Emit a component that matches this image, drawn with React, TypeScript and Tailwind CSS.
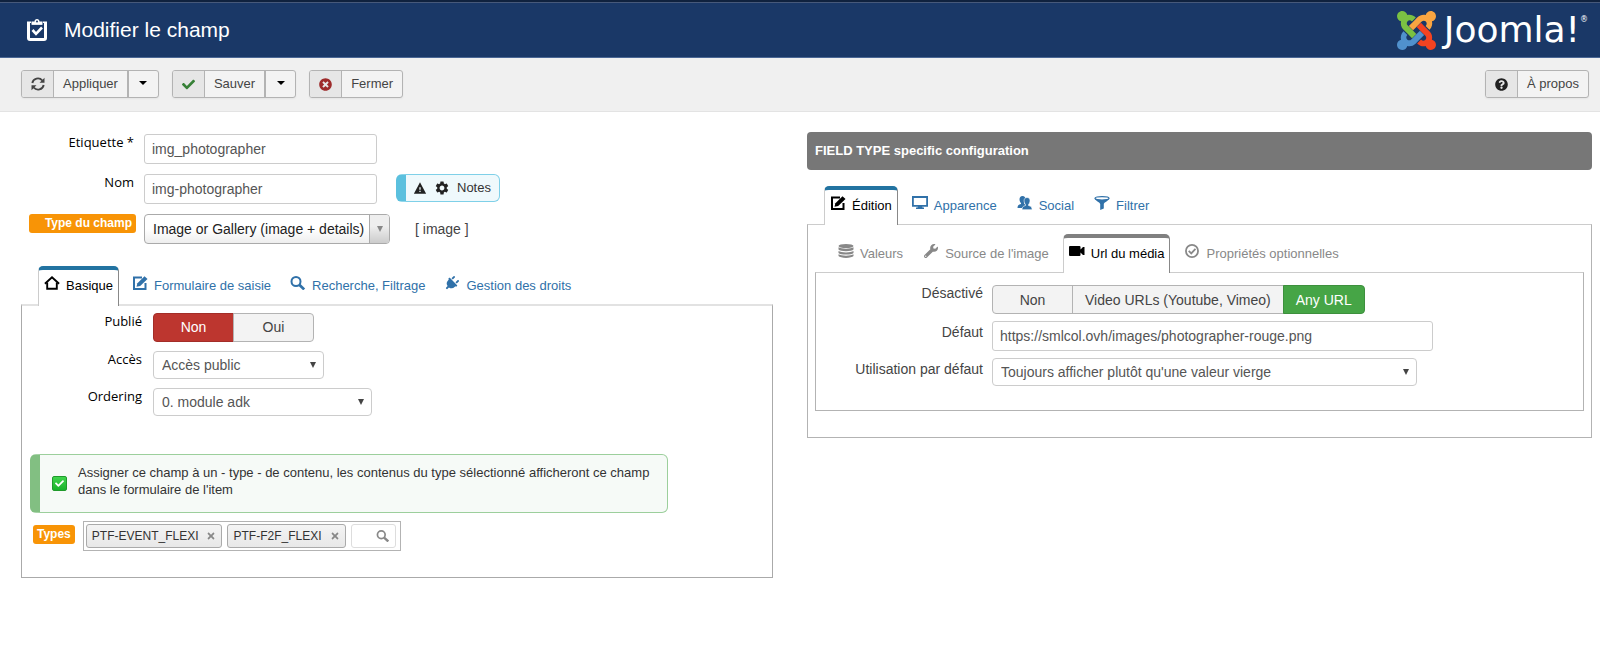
import React from 'react';
import { FaCheck, FaTimesCircle, FaQuestionCircle, FaPlug, FaWrench, FaTimes } from 'react-icons/fa';
import { IoMdWarning } from 'react-icons/io';
import { MdSettings } from 'react-icons/md';

type IconProps = { className?: string };

const ClipboardIcon: React.FC<IconProps> = ({ className }) => (
  <svg viewBox="0 0 20 22" className={className} fill="none">
    <path d="M1.500 3.500v15.500a1.500 1.500 0 0 0 1.500 1.500h14a1.500 1.500 0 0 0 1.500-1.500V3.500" stroke="currentColor" strokeWidth="3" />
    <path d="M0 2.500h4.500v3.200h11V2.500H20v1.500H0z" fill="currentColor" />
    <path d="M5 5.500v-3h2.500C7.500 1 8.500 0 10 0s2.500 1 2.500 2.500H15v3z" fill="currentColor" />
    <circle cx="10" cy="2.600" r="1" fill="#1a3867" />
    <path d="M5.500 11l3.500 3.800 6-6.300" stroke="currentColor" strokeWidth="2.600" />
  </svg>
);

const RefreshIcon: React.FC<IconProps> = ({ className }) => (
  <svg viewBox="0 0 14 14" className={className} fill="none">
    <path d="M1.300 6A5.700 5.700 0 0 1 11.300 3.500M12.700 8A5.700 5.700 0 0 1 2.700 10.500" stroke="currentColor" strokeWidth="1.900" />
    <path d="M13.500.800v5H8.500zM.500 13.200v-5h5z" fill="currentColor" />
  </svg>
);

const HomeIcon: React.FC<IconProps> = ({ className }) => (
  <svg viewBox="0 0 16 14" className={className} fill="none" stroke="currentColor" strokeWidth="1.900">
    <path d="M.900 7.800L8 1.300l7.100 6.500" />
    <path d="M3.200 6.500v6.300h9.600V6.500" />
  </svg>
);

const EditIcon: React.FC<IconProps> = ({ className }) => (
  <svg viewBox="0 0 16 14" className={className} fill="none">
    <path d="M10 1.500H2v11.500h11.500V7" stroke="currentColor" strokeWidth="2" />
    <path d="M4.500 10.800l.900-3.500L12.500.200 15.500 3 8.200 10z" fill="currentColor" />
  </svg>
);

const SearchIcon: React.FC<IconProps> = ({ className }) => (
  <svg viewBox="0 0 16 14" className={className} fill="none" stroke="currentColor">
    <circle cx="6" cy="5.500" r="4.500" strokeWidth="2" />
    <path d="M9.300 8.800l4.900 4.600" strokeWidth="2.800" />
  </svg>
);

const PlugIcon: React.FC<IconProps> = ({ className }) => (
  <span className={className}>
    <FaPlug className="size-[15px] rotate-45" />
  </span>
);

const ScreenIcon: React.FC<IconProps> = ({ className }) => (
  <svg viewBox="0 0 16 14" className={className}>
    <path d="M.900 1h14.200v8.800H.900z" fill="none" stroke="currentColor" strokeWidth="1.800" />
    <path d="M6 10h4l.500 1.500H12V13H4v-1.500h1.500z" fill="currentColor" />
  </svg>
);

const UsersIcon: React.FC<IconProps> = ({ className }) => (
  <svg viewBox="0 0 16 14" className={className} fill="currentColor">
    <path d="M5.500 0c2 0 3 1.300 3 3.200S7.800 6.300 7.100 7v1l2 .800L7.500 12H.500c0-2.500 1-3.300 3.500-4V7C3.200 6.300 2.500 5 2.500 3.200S3.500 0 5.500 0z" />
    <path
      d="M10 1.500c2 0 3 1.300 3 3.200s-.800 3-1.500 3.800v1c2.500.700 3.600 1.500 3.600 4.200H5c0-2.700 1-3.500 3.500-4.200v-1C7.800 7.700 7.100 6.600 7.100 4.700s1-3.200 2.900-3.200z"
      stroke="#fff"
      strokeWidth=".6"
    />
  </svg>
);

const FilterIcon: React.FC<IconProps> = ({ className }) => (
  <svg viewBox="0 0 16 14" className={className}>
    <path d="M.500 2.500C2 5 6 6.500 6.200 8v6l3.600-1.500V8C10 6.500 14 5 15.500 2.500z" fill="currentColor" />
    <ellipse cx="8" cy="2.300" rx="7" ry="1.700" fill="#fff" stroke="currentColor" strokeWidth="1.200" />
  </svg>
);

const DatabaseIcon: React.FC<IconProps> = ({ className }) => (
  <svg viewBox="0 0 16 14" className={className} fill="currentColor">
    <ellipse cx="8" cy="2" rx="7.500" ry="2" />
    <path d="M.500 3.300c2.500 1.900 12.500 1.900 15 0v2.300c-1.500 2.100-13.500 2.100-15 0z" />
    <path d="M.500 7c2.500 1.900 12.500 1.900 15 0v1.900c-1.500 2.100-13.500 2.100-15 0z" />
    <path d="M.500 10.300c2.500 1.900 12.500 1.900 15 0v1.800c-1.500 2.400-13.500 2.400-15 0z" />
  </svg>
);

const CameraIcon: React.FC<IconProps> = ({ className }) => (
  <svg viewBox="0 0 16 14" className={className} fill="currentColor">
    <path d="M1 2h9.500a1 1 0 0 1 1 1v2.500L14 3h1.500v8H14l-2.500-2.500V11a1 1 0 0 1-1 1H1a1 1 0 0 1-1-1V3a1 1 0 0 1 1-1z" />
  </svg>
);

const CheckCircleIcon: React.FC<IconProps> = ({ className }) => (
  <svg viewBox="0 0 15 15" className={className} fill="none" stroke="currentColor" strokeWidth="1.900">
    <circle cx="7.500" cy="7.500" r="6.500" />
    <path d="M4 7.300l2.700 2.800 4.500-4.900" />
  </svg>
);

const ARM =
  'M16.719 14.759L14.22 17.257l-2.37 2.37-.462.466c-1.368 1.365-3.297 1.83-5.047 1.397-.327 1.424-1.604 2.49-3.13 2.49C1.438 23.98 0 22.545 0 20.771c0-1.518 1.052-2.79 2.469-3.129-.437-1.761.027-3.701 1.403-5.07l.156-.16 2.37 2.37-.159.16c-.699.7-.697 1.833 0 2.532.7.7 1.834.701 2.533.001l.463-.465 2.37-2.371 2.502-2.502z';

const JoomlaLogo: React.FC = () => (
  <div className="flex items-center gap-2 text-white">
    <svg viewBox="0 0 24 24" className="size-[39px]">
      <path d={ARM} fill="#5091cd" />
      <path d={ARM} fill="#7ac143" transform="rotate(90 12 12)" />
      <path d={ARM} fill="#f9a541" transform="rotate(180 12 12)" />
      <path d={ARM} fill="#f44321" transform="rotate(270 12 12)" />
    </svg>
    <span className="flex items-start font-['DejaVu_Sans'] font-normal">
      <span className="text-[36px] leading-[40px]">Joomla!</span>
      <span className="text-[8px] leading-[20px]">®</span>
    </span>
  </div>
);

type ToolButtonProps = { icon: React.ReactNode; label: string; menu?: boolean };

const ToolButton: React.FC<ToolButtonProps> = ({ icon, label, menu }) => (
  <div className="flex h-7 rounded-[3px] border border-[#b3b3b3] bg-[#f3f3f3] text-[13px] text-[#444] shadow-xs">
    <button type="button" className="flex">
      <span className="flex h-full w-[31px] items-center justify-center rounded-l-[2px] bg-[#e6e6e6]">{icon}</span>
      <span className="flex h-full items-center border-l border-[#b3b3b3] px-[9px]">{label}</span>
    </button>
    {menu && (
      <button type="button" aria-label={`${label} : autres actions`} className="flex w-[31px] justify-center border-l-2 border-[#b3b3b3] pt-2.5">
        <svg viewBox="0 0 8 4" className="h-1 w-2">
          <path d="M0 0h8L4 4z" />
        </svg>
      </button>
    )}
  </div>
);

type Tab = { label: string; Icon: React.ElementType; active?: boolean };

const Tabs: React.FC<{ tabs: Tab[]; color: string; accent: string; thick?: boolean }> = ({ tabs, color, accent, thick }) => (
  <nav className={`relative flex pl-[17px] text-[13px] leading-5 ${color} ${thick ? '-mb-0.5 gap-[7px]' : '-mb-px gap-2'}`}>
    {tabs.map(({ label, Icon, active }) => (
      <a
        key={label}
        href="#"
        className={`flex gap-1.5 border-x border-t-4 px-[5px] pt-1.5 ${thick ? 'h-10' : 'h-[39px]'} ${
          active ? `rounded-t-[5px] border-r-[#888] border-l-[#ccc] bg-white text-black ${accent}` : 'border-transparent'
        }`}
      >
        <Icon className="h-3.5 w-4" />
        {label}
      </a>
    ))}
  </nav>
);

const Choices: React.FC<{ name: string; options: string[]; value: string; on: string }> = ({ name, options, value, on }) => (
  <div role="radiogroup" aria-label={name} className="flex h-[29px] text-[14px] text-[#444]">
    {options.map((o) => (
      <label
        key={o}
        className={`-ml-px flex min-w-[81px] items-center justify-center border px-3 first:ml-0 first:rounded-l-[4px] last:rounded-r-[4px] ${
          o === value ? on : 'border-[#b3b3b3] bg-[#f3f3f3]'
        }`}
      >
        <input type="radio" name={name} defaultChecked={o === value} className="sr-only" />
        {o}
      </label>
    ))}
  </div>
);

const Select: React.FC<{ id: string; value: string; width: string }> = ({ id, value, width }) => (
  <div className={`relative ${width}`}>
    <select id={id} className="block h-7 w-full appearance-none rounded-[4px] border border-[#ccc] bg-white pl-2 text-[14px] text-[#555]">
      <option>{value}</option>
    </select>
    <svg viewBox="0 0 6 6" className="pointer-events-none absolute top-[11px] right-2 size-1.5 text-[#444]" fill="currentColor">
      <path d="M0 0h6L3 6z" />
    </svg>
  </div>
);

const INPUT = 'block h-[30px] rounded-[3px] border border-[#ccc] bg-white px-[7px] text-[14px] text-[#555]';
const LABEL = "text-right font-['Open_Sans',sans-serif] text-[13px] leading-4 text-black";
const BADGE = 'rounded-[3px] bg-[#f89406] text-[12px] leading-[19px] font-bold text-white';

const mainTabs: Tab[] = [
  { label: 'Basique', Icon: HomeIcon, active: true },
  { label: 'Formulaire de saisie', Icon: EditIcon },
  { label: 'Recherche, Filtrage', Icon: SearchIcon },
  { label: 'Gestion des droits', Icon: PlugIcon },
];

const typeTabs: Tab[] = [
  { label: 'Édition', Icon: EditIcon, active: true },
  { label: 'Apparence', Icon: ScreenIcon },
  { label: 'Social', Icon: UsersIcon },
  { label: 'Filtrer', Icon: FilterIcon },
];

const editTabs: Tab[] = [
  { label: 'Valeurs', Icon: DatabaseIcon },
  { label: "Source de l'image", Icon: FaWrench },
  { label: 'Url du média', Icon: CameraIcon, active: true },
  { label: 'Propriétés optionnelles', Icon: CheckCircleIcon },
];

const FieldHead: React.FC = () => (
  <div className="grid grid-cols-[115px_1fr] items-start gap-x-2 gap-y-2.5">
    <label htmlFor="label" className={`${LABEL} pr-0.5`}>Etiquette *</label>
    <input id="label" defaultValue="img_photographer" className={`${INPUT} w-[233px]`} />

    <label htmlFor="name" className={`${LABEL} pr-0.5`}>Nom</label>
    <div className="flex gap-[19px]">
      <input id="name" defaultValue="img-photographer" className={`${INPUT} w-[233px]`} />
      <button
        type="button"
        className="flex h-7 items-center gap-[7px] rounded-[6px] border border-l-10 border-[#7fd0e8] border-l-[#5bc0de] bg-[#eff9fc] pr-2 pl-[7px] text-[13px] text-[#333]"
      >
        <IoMdWarning className="size-3.5 text-[#222]" />
        <MdSettings className="size-4 text-[#222]" />
        Notes
      </button>
    </div>

    <label htmlFor="type" className={`${BADGE} ml-2 pr-1 text-right`}>Type du champ</label>
    <div className="flex items-center gap-[25px] text-[14px] text-[#444]">
      <div className="relative">
        <select
          id="type"
          className="block h-[30px] w-[246px] appearance-none rounded-[4px] border border-[#aaa] bg-linear-to-b from-white from-50% to-[#eee] pl-2 text-[14px] text-[#222]"
        >
          <option>Image or Gallery (image + details)</option>
        </select>
        <span className="pointer-events-none absolute inset-y-px right-px flex w-5 items-center justify-center rounded-r-[3px] border-l border-[#aaa] bg-linear-to-t from-[#ccc] to-[#eee] to-60%">
          <svg viewBox="0 0 6 6" className="size-1.5" fill="#888">
            <path d="M0 0h6L3 6z" />
          </svg>
        </span>
      </div>
      <span>[ image ]</span>
    </div>
  </div>
);

const TypeTag: React.FC<{ name: string }> = ({ name }) => (
  <span className="flex h-6 items-center gap-2 rounded-[3px] border border-[#aaa] bg-linear-to-b from-[#f4f4f4] to-[#e8e8e8] px-[5px] text-[12px] text-[#333]">
    {name}
    <button type="button" aria-label={`Retirer ${name}`}>
      <FaTimes className="size-2.5 text-[#888]" />
    </button>
  </span>
);

const BasicPanel: React.FC = () => (
  <section className="border border-t-2 border-[#aaa] border-t-[#e2e2e2] px-2 pt-[7px] pb-[26px]">
    <div className="grid grid-cols-[112px_1fr] items-start gap-x-[11px] gap-y-[9px]">
      <span className={LABEL}>Publié</span>
      <Choices name="Publié" options={['Non', 'Oui']} value="Non" on="border-[#a32d28] bg-[#bd362f] text-white" />
      <label htmlFor="access" className={LABEL}>Accès</label>
      <Select id="access" value="Accès public" width="w-[171px]" />
      <label htmlFor="ordering" className={LABEL}>Ordering</label>
      <Select id="ordering" value="0. module adk" width="w-[219px]" />
    </div>

    <div className="mt-[38px] flex max-w-[638px] items-start gap-[11px] rounded-[6px] border border-l-10 border-[#9ccf9c] border-l-[#82bf82] bg-[#f6faf7] pt-[9px] pb-3.5 pl-3 text-[13px] leading-[17px] text-[#333]">
      <span className="mt-3 flex size-[15px] shrink-0 items-center justify-center rounded-[2px] border border-[#1f9a2b] bg-linear-to-b from-[#3fd44c] to-[#16b32a]">
        <FaCheck className="size-[9px] text-white" />
      </span>
      <p className="max-w-[580px]">
        Assigner ce champ à un - type - de contenu, les contenus du type sélectionné afficheront ce champ dans le formulaire de l'item
      </p>
    </div>

    <div className="mt-2 flex items-start gap-2 pl-[3px]">
      <label htmlFor="types" className={`${BADGE} mt-1 px-1`}>Types</label>
      <div className="flex items-center gap-[5px] border border-[#b3b3b3] bg-white py-0.5 pr-1 pl-0.5">
        <TypeTag name="PTF-EVENT_FLEXI" />
        <TypeTag name="PTF-F2F_FLEXI" />
        <span className="relative">
          <input id="types" className="block h-6 w-[45px] rounded-[3px] border border-[#ddd] bg-white" />
          <SearchIcon className="pointer-events-none absolute top-1.5 right-1.5 h-3 w-3.5 text-[#888]" />
        </span>
      </div>
    </div>
  </section>
);

const SpecificPanel: React.FC = () => (
  <section className="border border-[#b3b3b3] border-t-[#ccc] px-[7px] pt-[9px] pb-[26px]">
    <Tabs tabs={editTabs} color="text-[#888]" accent="border-t-[#808080]" />
    <div className="border border-[#b3b3b3] border-t-[#ccc] pt-3 pb-6">
      <div className="grid grid-cols-[167px_1fr] items-start gap-x-[9px] gap-y-[7px] text-[14px] leading-4 text-[#444]">
        <span className="text-right">Désactivé</span>
        <Choices
          name="Désactivé"
          options={['Non', 'Video URLs (Youtube, Vimeo)', 'Any URL']}
          value="Any URL"
          on="border-[#3d903d] bg-[#46a546] text-white"
        />
        <label htmlFor="default" className="pt-[3px] text-right">Défaut</label>
        <input id="default" defaultValue="https://smlcol.ovh/images/photographer-rouge.png" className={`${INPUT} w-[441px]`} />
        <label htmlFor="usage" className="pt-[3px] text-right">Utilisation par défaut</label>
        <Select id="usage" value="Toujours afficher plutôt qu'une valeur vierge" width="w-[425px]" />
      </div>
    </div>
  </section>
);

const App: React.FC = () => (
  <div className="min-h-screen bg-white font-['Liberation_Sans',Arial,sans-serif]">
    <div className="h-[3px] border-b border-[#47597a] bg-[#10223e]" />
    <header className="flex h-[55px] items-center justify-between border-b border-[#4a6795] bg-[#1a3867] pr-3 pl-[27px]">
      <div className="flex items-center gap-[17px] text-white">
        <ClipboardIcon className="h-[22px] w-5" />
        <h1 className="text-[21px]">Modifier le champ</h1>
      </div>
      <JoomlaLogo />
    </header>

    <div className="flex h-[54px] items-start gap-[13px] border-b border-[#e3e3e3] bg-[#f0f0f0] pt-3 pr-[11px] pl-[21px]">
      <ToolButton icon={<RefreshIcon className="size-3.5" />} label="Appliquer" menu />
      <ToolButton icon={<FaCheck className="size-[13px] text-[#378137]" />} label="Sauver" menu />
      <ToolButton icon={<FaTimesCircle className="size-[13px] text-[#9d2b2b]" />} label="Fermer" />
      <div className="ml-auto">
        <ToolButton icon={<FaQuestionCircle className="size-[13px] text-[#222]" />} label="À propos" />
      </div>
    </div>

    <main className="flex items-start gap-[34px] pt-5 pr-2 pl-[21px]">
      <div className="w-[752px] shrink pt-0.5">
        <FieldHead />
        <div className="mt-[22px]">
          <Tabs tabs={mainTabs} color="text-[#3071a9]" accent="border-t-[#2273a1]" thick />
          <BasicPanel />
        </div>
      </div>
      <div className="flex-1">
        <h2 className="mb-4 flex h-[38px] items-center rounded-[4px] bg-[#777] px-2 text-[13px] font-bold text-white">
          FIELD TYPE specific configuration
        </h2>
        <Tabs tabs={typeTabs} color="text-[#3071a9]" accent="border-t-[#2273a1]" />
        <SpecificPanel />
      </div>
    </main>
  </div>
);

export default App;
